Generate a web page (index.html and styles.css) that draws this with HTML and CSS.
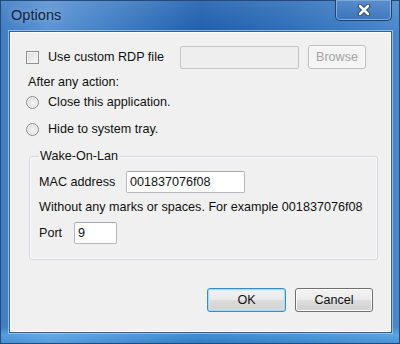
FILE: index.html
```html
<!DOCTYPE html>
<html>
<head>
<meta charset="utf-8">
<link rel="stylesheet" href="styles.css">
</head>
<body>
<div class="window">
  <div class="titlebar">
    <span class="title">Options</span>
    <div class="close">
      <svg width="14" height="12" viewBox="0 0 14 12">
        <path d="M3 2 L11 10 M11 2 L3 10" stroke="#243a58" stroke-width="4.4" stroke-linecap="round"/>
        <path d="M3 2 L11 10 M11 2 L3 10" stroke="#ffffff" stroke-width="2.6" stroke-linecap="round"/>
      </svg>
    </div>
  </div>
  <div class="client">
    <div class="row-file">
      <label class="check-label"><span class="checkbox"></span><span>Use custom RDP file</span></label>
      <div class="textbox disabled"></div>
      <div class="btn btn-disabled">Browse</div>
    </div>
    <div class="after">After any action:</div>
    <label class="radio-row first"><span class="radio"></span><span>Close this application.</span></label>
    <label class="radio-row second"><span class="radio"></span><span>Hide to system tray.</span></label>
    <fieldset class="group">
      <legend>Wake-On-Lan</legend>
      <div class="field-row">
        <span class="field-label mac">MAC address</span>
        <div class="textbox mac-input">001837076f08</div>
      </div>
      <div class="hint">Without any marks or spaces. For example 001837076f08</div>
      <div class="field-row port-row">
        <span class="field-label port">Port</span>
        <div class="textbox port-input">9</div>
      </div>
    </fieldset>
    <div class="buttons">
      <div class="btn btn-default">OK</div>
      <div class="btn">Cancel</div>
    </div>
  </div>
</div>
</body>
</html>
```
FILE: styles.css
```css
* { box-sizing: border-box; }
html, body { margin: 0; padding: 0; }
body {
  width: 400px;
  height: 344px;
  overflow: hidden;
  font-family: "Liberation Sans", Arial, sans-serif;
  font-size: 12.6px;
  color: #111111;
}
.window {
  width: 400px;
  height: 344px;
  display: flex;
  flex-direction: column;
  background:
    linear-gradient(180deg, rgba(255,255,255,0.10) 0px, rgba(255,255,255,0) 31px, rgba(0,0,0,0) 326px, rgba(110,200,255,0.45) 334px, rgba(70,160,230,0.35) 344px),
    linear-gradient(90deg, #3f7cc3 0%, #5a93d3 12%, #3d7bc2 30%, #1f5fae 50%, #2c6cb7 70%, #3d7cc2 88%, #4a88cb 100%);
  border: 1px solid #234a78;
}
.titlebar {
  height: 30px;
  display: flex;
  align-items: flex-start;
  justify-content: space-between;
  padding-left: 10px;
}
.title {
  font-size: 14.6px;
  color: #14243d;
  margin-top: 6px;
  text-shadow: 0 0 6px rgba(255,255,255,0.4);
}
.close {
  width: 57px;
  height: 21px;
  margin-top: -1px;
  margin-right: 7px;
  border: 1px solid #1f416c;
  border-top: none;
  border-radius: 0 0 5px 5px;
  box-shadow: inset 0 0 0 1px rgba(170,205,245,0.6);
  background: linear-gradient(180deg, rgba(90,140,205,0.6), rgba(50,105,180,0.5));
  display: flex;
  align-items: center;
  justify-content: center;
}
.close svg { display: block; }
.client {
  margin: 0 7px 10px 8px;
  flex: 1;
  background: #f0f0f0;
  border: 1px solid #3f5f84;
  box-shadow: inset 0 0 0 1px #ffffff, 0 0 0 1px rgba(160,215,250,0.7);
  padding: 13px 0 0 15px;
  display: flex;
  flex-direction: column;
  align-items: flex-start;
}
.row-file {
  display: flex;
  align-items: center;
  height: 24px;
}
.check-label {
  width: 155px;
  display: flex;
  align-items: center;
}
.checkbox {
  width: 13px;
  height: 13px;
  border: 1px solid #8f8f8f;
  background: linear-gradient(135deg, #dcdcdc, #f7f7f7);
  box-shadow: inset 0 0 0 1px #f4f4f4;
  margin-right: 9px;
  margin-left: 1px;
}
.textbox {
  height: 22px;
  border: 1px solid #b5b8bd;
  border-top-color: #a6a9ae;
  background: #ffffff;
  border-radius: 2px;
  padding: 3px 0 0 3px;
  line-height: 15px;
}
.textbox.disabled {
  width: 119px;
  height: 23px;
  background: #eeeeee;
  border-color: #c5c5c5;
  margin-top: 1px;
}
.btn {
  width: 78px;
  height: 24px;
  border: 1px solid #707070;
  border-radius: 3px;
  background: linear-gradient(180deg, #f3f3f3 0%, #ebebeb 48%, #dddddd 52%, #d0d0d0 100%);
  box-shadow: inset 0 0 0 1px #fbfbfb;
  display: flex;
  align-items: center;
  justify-content: center;
  color: #111111;
}
.btn-disabled {
  width: 58px;
  margin-left: 9px;
  background: #f4f4f4;
  border-color: #bdbdbd;
  color: #a3a3a3;
}
.after {
  margin-top: 5px;
  margin-left: 3px;
  line-height: 16px;
}
.radio-row {
  display: flex;
  align-items: center;
  line-height: 16px;
}
.radio-row.first { margin-top: 4px; }
.radio-row.second { margin-top: 11px; }
.radio {
  width: 13px;
  height: 13px;
  border-radius: 50%;
  border: 1px solid #8c8c8c;
  background: radial-gradient(circle at 55% 55%, #f6f6f6 0%, #dcdcdc 70%, #cfcfcf 100%);
  box-shadow: inset 0 0 0 1px #f2f2f2;
  margin-left: 1px;
  margin-right: 9px;
}
.group {
  margin: 11px 0 0 4px;
  width: 349px;
  padding: 7px 0 15px 9px;
  border: 1px solid #d4d8dc;
  border-radius: 3px;
  box-shadow: inset 0 0 0 1px #fafafa;
}
.group legend {
  padding: 0 1px;
  line-height: 16px;
}
.field-row {
  display: flex;
  align-items: center;
}
.field-label.mac { width: 87px; }
.field-label.port { width: 35px; }
.mac-input { width: 119px; }
.port-input { width: 43px; }
.hint {
  margin-top: 6px;
  line-height: 16px;
}
.port-row { margin-top: 7px; }
.buttons {
  display: flex;
  gap: 9px;
  margin-top: 28px;
  margin-left: 182px;
}
.btn-default {
  width: 79px;
  border-color: #3c8cc4;
  box-shadow: inset 0 0 0 1px #9fdcf5, inset 0 0 0 2px rgba(200,235,250,0.5);
  background: linear-gradient(180deg, #f2f2f2 0%, #eaeaea 48%, #dcdcdc 52%, #d2d2d2 100%);
}
```
